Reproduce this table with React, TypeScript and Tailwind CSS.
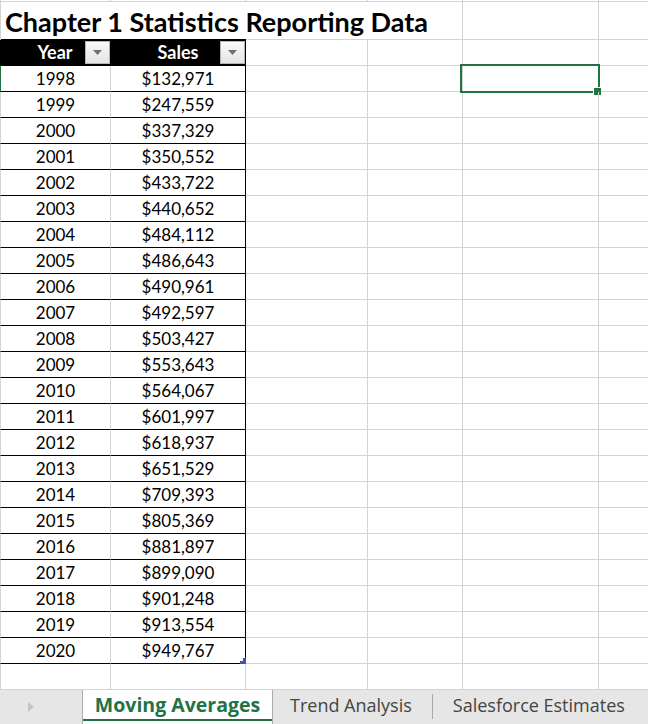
import React from 'react';

const rows: [string, string][] = [
  ['1998', '$132,971'],
  ['1999', '$247,559'],
  ['2000', '$337,329'],
  ['2001', '$350,552'],
  ['2002', '$433,722'],
  ['2003', '$440,652'],
  ['2004', '$484,112'],
  ['2005', '$486,643'],
  ['2006', '$490,961'],
  ['2007', '$492,597'],
  ['2008', '$503,427'],
  ['2009', '$553,643'],
  ['2010', '$564,067'],
  ['2011', '$601,997'],
  ['2012', '$618,937'],
  ['2013', '$651,529'],
  ['2014', '$709,393'],
  ['2015', '$805,369'],
  ['2016', '$881,897'],
  ['2017', '$899,090'],
  ['2018', '$901,248'],
  ['2019', '$913,554'],
  ['2020', '$949,767'],
];

function FilterButton() {
  return (
    <div className="absolute right-0 top-px w-[25px] h-[23px] border border-[#b4b4b4] bg-gradient-to-b from-[#fafafa] to-[#e4e4e4] flex items-center justify-center">
      <svg width="9" height="5" viewBox="0 0 9 5">
        <path d="M0 0 L9 0 L4.5 5 Z" fill="#707070" />
      </svg>
    </div>
  );
}

// the empty columns C..F to the right of the table
function RestCells({ selected }: { selected?: boolean }) {
  return (
    <>
      <div className="w-[122px] border-r border-b border-[#d4d4d4]" />
      <div className="w-[95px] border-r border-b border-[#d4d4d4]" />
      <div className="w-[136px] border-r border-b border-[#d4d4d4] relative">
        {selected && (
          <>
            <div className="absolute left-[-3px] top-[-2px] w-[140px] h-[29px] border-2 border-[#217346]" />
            <div className="absolute left-[130px] top-[21px] w-[8px] h-[8px] bg-[#217346] border-l border-t border-white" />
          </>
        )}
      </div>
      <div className="flex-1 border-b border-[#d4d4d4]" />
    </>
  );
}

export default function App() {
  return (
    <div className="w-[648px] h-[724px] bg-white overflow-hidden flex flex-col font-['Lato',sans-serif] text-black">
      {/* sliver of the row above */}
      <div className="flex h-px">
        <div className="w-[111px] border-l border-r border-[#d4d4d4]" />
        <div className="w-[135px] border-r border-[#d4d4d4]" />
        <div className="w-[122px] border-r border-[#d4d4d4]" />
        <div className="w-[95px] border-r border-[#d4d4d4]" />
        <div className="w-[136px] border-r border-[#d4d4d4]" />
        <div className="flex-1" />
      </div>

      {/* title row */}
      <div className="flex h-[39px] border-t border-[#d4d4d4]">
        <div className="w-[463px] flex flex-col border-l border-r border-[#d4d4d4]">
          <div className="flex-1 flex items-end pl-[4px] pb-[1px]">
            <span className="text-[27px] font-bold leading-[33px] whitespace-nowrap">
              Chapter 1 Statistics Reporting Data
            </span>
          </div>
          <div className="flex h-px">
            <div className="w-[245px] bg-black" />
            <div className="flex-1 bg-[#d4d4d4]" />
          </div>
        </div>
        <div className="w-[136px] border-r border-b border-[#d4d4d4]" />
        <div className="flex-1 border-b border-[#d4d4d4]" />
      </div>

      {/* header row */}
      <div className="flex h-[26px]">
        <div className="w-[111px] bg-black border-b border-r border-black relative flex items-center justify-center">
          <span className="text-white font-bold text-[18px]">Year</span>
          <FilterButton />
        </div>
        <div className="w-[135px] bg-black border-b border-r border-black relative flex items-center justify-center">
          <span className="text-white font-bold text-[18px]">Sales</span>
          <FilterButton />
        </div>
        <RestCells />
      </div>

      {/* data rows */}
      {rows.map(([year, sales], i) => (
        <div key={year} className="flex h-[26px] text-[17px]">
          <div
            className={
              'w-[111px] border-l border-r border-b border-r-[#d4d4d4] border-b-black flex items-center justify-center ' +
              (i === 0 ? 'border-l-[#217346]' : 'border-l-[#d4d4d4]')
            }
          >
            {year}
          </div>
          <div className="w-[135px] border-r border-b border-black flex items-center justify-center relative">
            {sales}
            {i === rows.length - 1 && (
              <svg className="absolute right-[-1px] bottom-[-1px]" width="6" height="6" viewBox="0 0 6 6">
                <path d="M3 0 H6 V6 H0 V3 H3 Z" fill="#4052b5" />
              </svg>
            )}
          </div>
          <RestCells selected={i === 0} />
        </div>
      ))}

      {/* empty row */}
      <div className="flex h-[26px]">
        <div className="w-[111px] border-l border-r border-b border-[#d4d4d4]" />
        <div className="w-[135px] border-r border-b border-[#d4d4d4]" />
        <RestCells />
      </div>

      {/* sheet tabs */}
      <div className="flex-1 flex bg-[#e6e6e6] font-['Open_Sans',sans-serif] text-[18px] text-[#444444]">
        <div className="w-[82px] flex items-center pl-[28px]">
          <svg width="6" height="10" viewBox="0 0 6 10">
            <path d="M0 0 L6 5 L0 10 Z" fill="#c4c4c4" />
          </svg>
        </div>
        <div className="w-[191px] bg-white border-l border-r border-[#ababab] flex flex-col">
          <div className="flex-1 flex items-center justify-center font-bold text-[19.5px] text-[#217346]">
            Moving Averages
          </div>
          <div className="h-[2px] bg-[#217346] mb-[3px]" />
        </div>
        <div className="flex items-center pl-[17px] pr-[20px] pb-[3px]">Trend Analysis</div>
        <div className="w-px h-[25px] mt-[4px] bg-[#a8a8a8]" />
        <div className="flex items-center pl-[20px] pb-[3px]">Salesforce Estimates</div>
      </div>
    </div>
  );
}
